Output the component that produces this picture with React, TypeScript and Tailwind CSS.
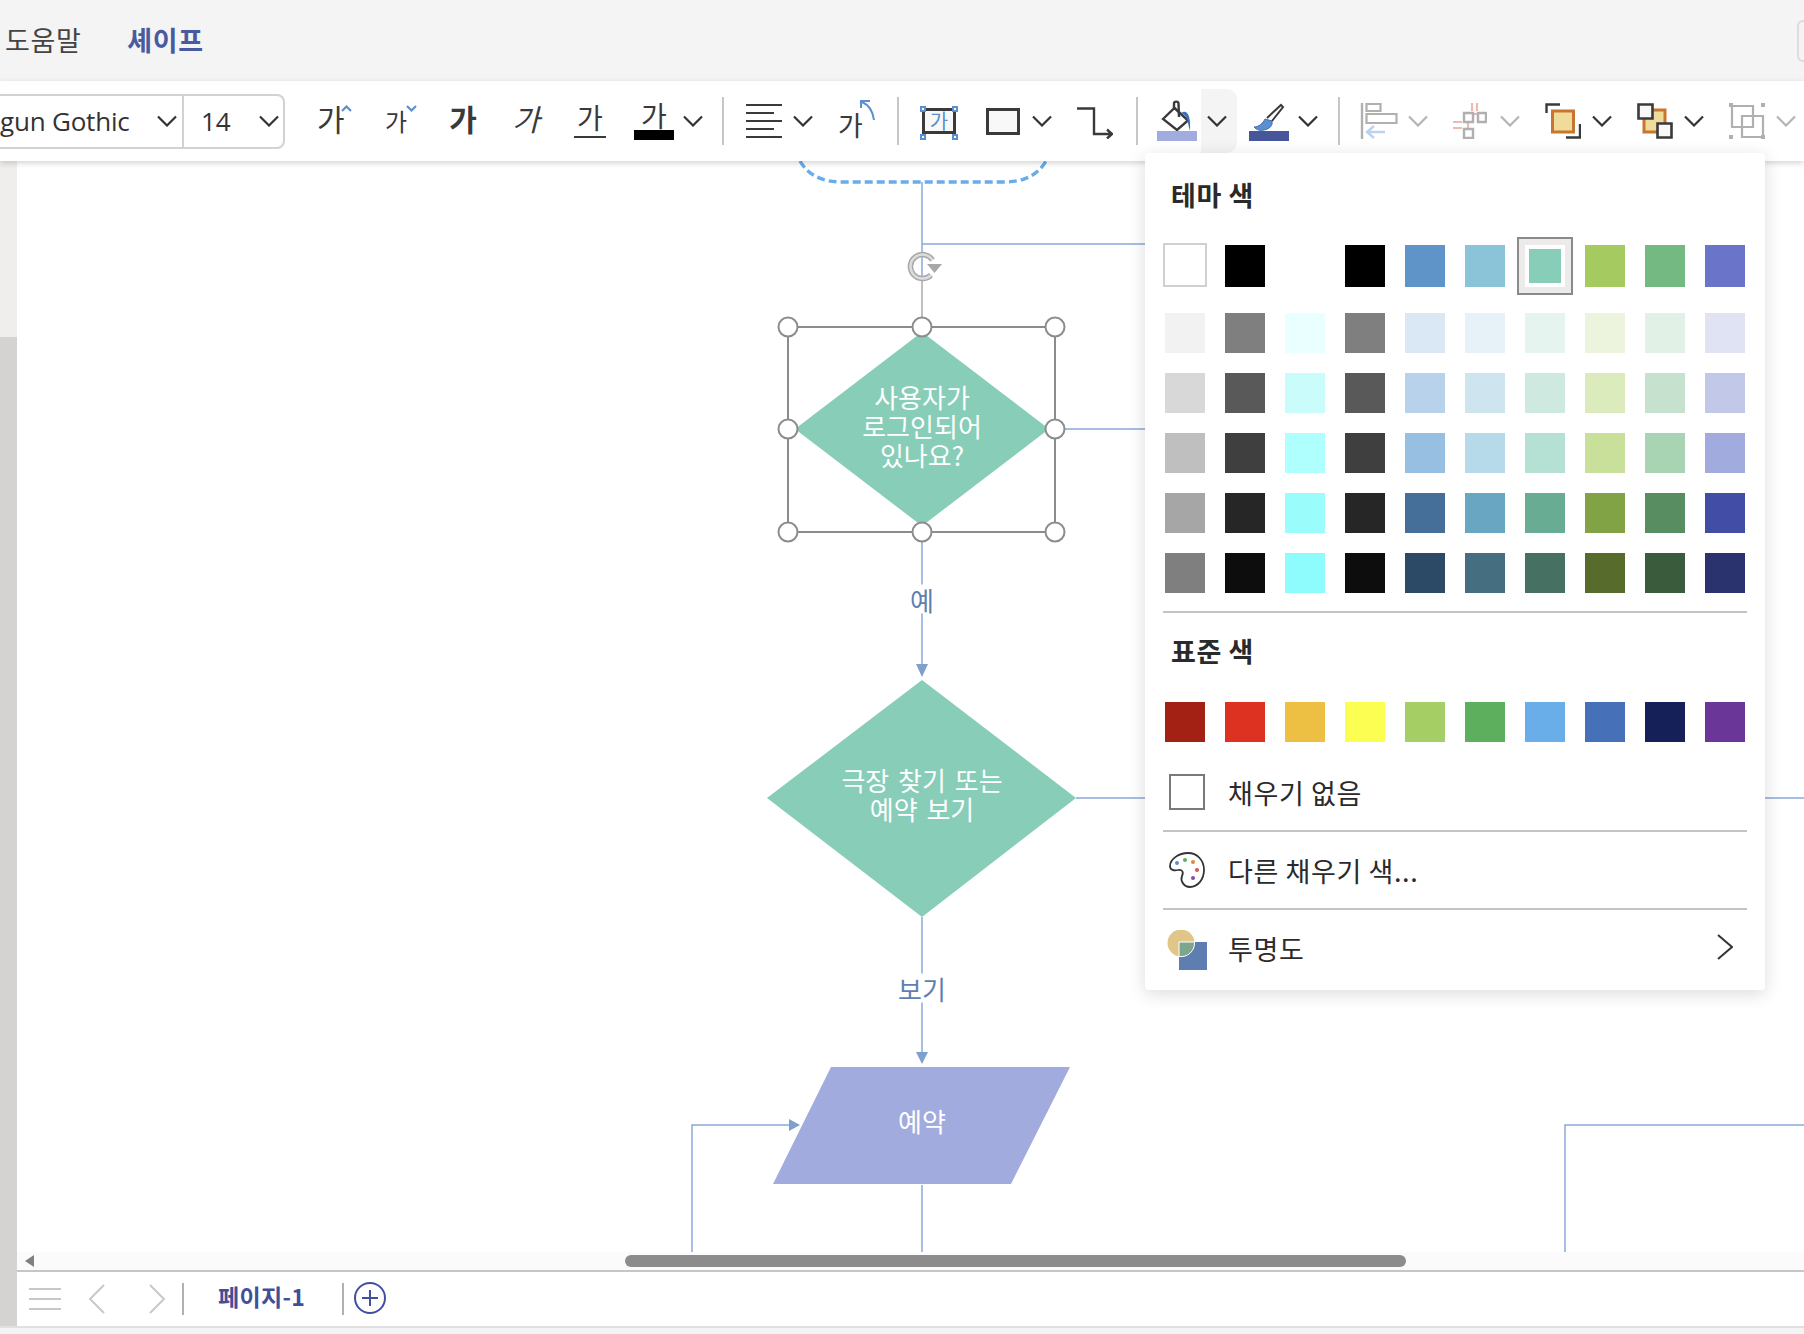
import type { ReactNode } from "react";

const FONT = "font-['Noto_Sans_CJK_KR','Open_Sans',sans-serif]";

const themeRows = [
  ["bg-[#f2f2f2]", "bg-[#7f7f7f]", "bg-[#eaffff]", "bg-[#7f7f7f]", "bg-[#dae8f5]", "bg-[#e6f2f8]", "bg-[#e5f4ef]", "bg-[#ecf4dd]", "bg-[#e1f1e6]", "bg-[#e0e3f3]"],
  ["bg-[#d8d8d8]", "bg-[#595959]", "bg-[#cbfcfc]", "bg-[#595959]", "bg-[#b7d2ea]", "bg-[#cee5ef]", "bg-[#cde9e0]", "bg-[#dbebbc]", "bg-[#c6e2cf]", "bg-[#c2c8e8]"],
  ["bg-[#bfbfbf]", "bg-[#3f3f3f]", "bg-[#afffff]", "bg-[#3f3f3f]", "bg-[#96bfe2]", "bg-[#b6dae9]", "bg-[#b4e1d4]", "bg-[#c9e09b]", "bg-[#a9d4b4]", "bg-[#a2abdd]"],
  ["bg-[#a6a6a6]", "bg-[#262626]", "bg-[#9bfcfc]", "bg-[#262626]", "bg-[#456e98]", "bg-[#68a6c1]", "bg-[#69ac94]", "bg-[#82a345]", "bg-[#588c61]", "bg-[#424da6]"],
  ["bg-[#7f7f7f]", "bg-[#0d0d0d]", "bg-[#8efcfc]", "bg-[#0d0d0d]", "bg-[#2c4a66]", "bg-[#456e80]", "bg-[#467162]", "bg-[#576b2c]", "bg-[#3a5c3d]", "bg-[#2b336f]"],
];

const standardColors = ["bg-[#a32015]", "bg-[#dd3222]", "bg-[#edc044]", "bg-[#fdfe52]", "bg-[#a5ce64]", "bg-[#5dae5d]", "bg-[#69aee9]", "bg-[#4670b8]", "bg-[#152058]", "bg-[#6a3799]"];

function Chevron({ className = "", muted = false }: { className?: string; muted?: boolean }) {
  return (
    <svg width="20" height="12" viewBox="0 0 20 12" className={`shrink-0 ${className}`} fill="none" stroke={muted ? "#b4b4b4" : "#333"} strokeWidth="2.2">
      <path d="M1 1.5l9 9 9-9" />
    </svg>
  );
}

function Divider({ className = "" }: { className?: string }) {
  return <div className={`w-[2px] h-[48px] bg-[#c6c6c6] shrink-0 ${className}`} />;
}

function Ga({ className = "" }: { className?: string }) {
  return <span className={`block leading-none text-[#3a3a3a] ${className}`}>가</span>;
}

function Box({ className, children }: { className: string; children: ReactNode }) {
  return <div className={`relative h-[60px] shrink-0 flex flex-col items-center justify-center ${className}`}>{children}</div>;
}

function Toolbar() {
  return (
    <div className="relative z-10 h-[80px] shrink-0 bg-white flex items-center shadow-[0_2px_6px_rgba(0,0,0,0.18)] text-[#333]">
      <div className="w-[285px] h-[55px] shrink-0 flex items-center border-2 border-l-0 border-[#d2d2d2] rounded-r-[8px] text-[26px] font-['Open_Sans',sans-serif]">
        <div className="w-[184px] h-full flex items-center justify-between pr-[5px] border-r-2 border-[#d2d2d2] overflow-hidden">
          <span className="whitespace-nowrap tracking-[-0.2px]">gun Gothic</span>
          <Chevron />
        </div>
        <div className="flex-1 flex items-center justify-between pl-[17px] pr-[4px]">
          <span>14</span>
          <Chevron />
        </div>
      </div>

      <Box className="ml-[32px] w-[35px] items-start">
        <Ga className="text-[30px] -mt-[6px]" />
        <svg width="11" height="7" viewBox="0 0 11 7" className="absolute right-0 top-[14px]" fill="none" stroke="#5b8fd0" strokeWidth="2.2"><path d="M1 6l4.500-4.500L10 6" /></svg>
      </Box>
      <Box className="ml-[33px] w-[32px] items-start">
        <Ga className="text-[24px]" />
        <svg width="11" height="7" viewBox="0 0 11 7" className="absolute right-0 top-[14px]" fill="none" stroke="#5b8fd0" strokeWidth="2.2"><path d="M1 1l4.500 4.500L10 1" /></svg>
      </Box>
      <Box className="ml-[33px] w-[26px]"><Ga className="text-[30px] font-bold -mt-[6px]" /></Box>
      <Box className="ml-[36px] w-[28px]"><Ga className="text-[30px] italic -mt-[6px]" /></Box>
      <Box className="ml-[34px] w-[32px]">
        <Ga className="text-[28px] -mt-[2px]" />
        <div className="w-[32px] h-[2px] bg-[#3a3a3a] mt-[5px]" />
      </Box>
      <Box className="ml-[28px] w-[40px]">
        <Ga className="text-[28px] -mt-[2px]" />
        <div className="w-[40px] h-[10px] bg-black mt-[1px]" />
      </Box>
      <Chevron className="ml-[9px]" />
      <Divider className="ml-[19px]" />

      <svg width="36" height="36" viewBox="0 0 36 36" className="ml-[22px] shrink-0" fill="none" stroke="#3a3a3a" strokeWidth="2">
        <path d="M0 2h36M0 10h28M0 18h36M0 26h28M0 34h36" />
      </svg>
      <Chevron className="ml-[11px]" />
      <Box className="ml-[25px] w-[38px] items-start pt-[6px]">
        <Ga className="text-[27px]" />
        <svg width="16" height="21" viewBox="0 0 16 21" className="absolute right-0 top-[9px]" fill="none" stroke="#5b8fd0" strokeWidth="2"><path d="M1 8V1h9M2 2c7 3 11 10 12 18" /></svg>
      </Box>
      <Divider className="ml-[21px]" />

      <Box className="ml-[21px] w-[38px]">
        <div className="w-[34px] h-[26px] border-[3px] border-[#3a3a3a] bg-[#f8f8f8] flex items-center justify-center text-[20px] leading-none text-[#5b8fd0]">가</div>
        <span className="absolute left-0 top-[15px] w-[6px] h-[6px] bg-white border-2 border-[#5b8fd0]" />
        <span className="absolute right-0 top-[15px] w-[6px] h-[6px] bg-white border-2 border-[#5b8fd0]" />
        <span className="absolute left-0 bottom-[11px] w-[6px] h-[6px] bg-white border-2 border-[#5b8fd0]" />
        <span className="absolute right-0 bottom-[11px] w-[6px] h-[6px] bg-white border-2 border-[#5b8fd0]" />
      </Box>
      <div className="ml-[28px] w-[34px] h-[27px] border-[3px] border-[#3a3a3a] bg-[#f8f8f8] shrink-0" />
      <Chevron className="ml-[12px]" />
      <svg width="36" height="36" viewBox="0 0 36 36" className="ml-[25px] shrink-0" fill="none" stroke="#3a3a3a" strokeWidth="2.4">
        <path d="M0 5.500h17v25.500h18M30 26.500l5 4.500-5 4.500" />
      </svg>
      <Divider className="ml-[23px]" />

      <Box className="ml-[19px] w-[40px] justify-start pt-[9px]">
        <svg width="40" height="31" viewBox="0 0 40 31" fill="none">
          <path d="M6 19L17.500 8 31 20.500 20 30z" stroke="#3a3a3a" strokeWidth="2.4" fill="#fff" />
          <path d="M17 10V3.500c0-2.500 4.500-2.500 4.500 0L22 17" stroke="#3a3a3a" strokeWidth="2.4" />
          <path d="M24 13c6-4 10 2 9 18-2-6-2-11-4-14-1-2-3-3-5-4z" fill="#3f6fb8" />
        </svg>
        <div className="w-[40px] h-[10px] bg-[#a2abdd]" />
      </Box>
      <div className="ml-[4px] w-[36px] h-[64px] shrink-0 bg-[#f4f4f4] rounded-r-[10px] flex items-center pl-[6px]"><Chevron /></div>
      <Box className="ml-[12px] w-[40px] justify-start pt-[11px]">
        <svg width="40" height="29" viewBox="0 0 40 29" fill="none">
          <path d="M5 25c5 0 9-4 11-8l7 2c1 5-3 8-8 9-4 1-7 0-10-3z" fill="#5b8fd0" stroke="#3f6fb8" />
          <path d="M18 16L32 3l2 2-11 14" stroke="#3a3a3a" strokeWidth="2" />
        </svg>
        <div className="w-[40px] h-[10px] bg-[#47569b]" />
      </Box>
      <Chevron className="ml-[9px]" />
      <Divider className="ml-[20px]" />

      <svg width="38" height="38" viewBox="0 0 38 38" className="ml-[20px] shrink-0" fill="none">
        <path d="M2 1v36" stroke="#b0b0b0" strokeWidth="2.4" />
        <path d="M6.500 2h14v7h-14zM6.500 12h30v9h-30z" stroke="#b0b0b0" strokeWidth="2.2" />
        <path d="M25 30H7M14 24l-7 6 7 6" stroke="#bcd3ef" strokeWidth="2.4" />
      </svg>
      <Chevron muted className="ml-[10px]" />
      <svg width="34" height="36" viewBox="0 0 34 36" className="ml-[25px] shrink-0" fill="none">
        <path d="M19 0v8M24 0v8M0 19h9M0 25h9M19 11h6M15 20v6" stroke="#efb8b0" strokeWidth="2.2" />
        <path d="M11 10h9v9h-9zM25 10h8v9h-8zM11 26h9v9h-9z" stroke="#b0b0b0" strokeWidth="2.4" />
      </svg>
      <Chevron muted className="ml-[13px]" />
      <svg width="36" height="36" viewBox="0 0 36 36" className="ml-[25px] shrink-0" fill="none">
        <path d="M1.500 10V1.500H15M35 21v13.500H21" stroke="#3a3a3a" strokeWidth="2.4" />
        <path d="M7.500 8h21v21h-21z" fill="#efdc9a" stroke="#c87530" strokeWidth="3" />
      </svg>
      <Chevron className="ml-[11px]" />
      <svg width="36" height="36" viewBox="0 0 36 36" className="ml-[25px] shrink-0" fill="none">
        <path d="M7 7h21v22H7z" fill="#efdc9a" stroke="#c87530" strokeWidth="3" />
        <path d="M1.500 1.500h14v14h-14zM20.500 20.500h14v14h-14z" fill="#f8f8f8" stroke="#3a3a3a" strokeWidth="2.6" />
      </svg>
      <Chevron className="ml-[11px]" />
      <svg width="36" height="36" viewBox="0 0 36 36" className="ml-[25px] shrink-0" fill="none">
        <path d="M3 3h21v21H3zM13 13h21v21H13z" stroke="#b0b0b0" strokeWidth="2.2" />
        <path d="M0 0h4v4H0zM32 0h4v4h-4zM0 32h4v4H0zM32 32h4v4h-4z" fill="#b0b0b0" />
      </svg>
      <Chevron muted className="ml-[11px]" />
    </div>
  );
}

function Flowchart() {
  return (
    <svg width="1787" height="1091" viewBox="17 161 1787 1091" className="absolute inset-0" fill="none">
      <path d="M800 161c8 14 22 21 42 21h162c20 0 34-7 42-21" stroke="#68aceb" strokeWidth="3.4" strokeDasharray="8 4" />
      <g stroke="#8ca8da" strokeWidth="1.5">
        <path d="M922 182V282M922 244H1145M1065 429H1145M922 532V664M1076 798H1145M1765 798H1804M922 917V1052M922 1185V1252" />
        <path d="M692 1252V1125H790M1565 1252V1125H1804" />
      </g>
      <path d="M916 664h12l-6 13zM916 1052h12l-6 12zM789 1119v12l11-6z" fill="#7f9fcd" />
      <path d="M922 282V317" stroke="#c0c0c0" strokeWidth="2" />
      <path d="M932.500 260A12 12 0 1 0 931 275" stroke="#a8a8a8" strokeWidth="5.500" />
      <path d="M932.500 260A12 12 0 1 0 931 275" stroke="#dcdcdc" strokeWidth="2.500" />
      <path d="M927 264h15l-7.500 9z" fill="#a8a8a8" />

      <path d="M922 332L1049 429 922 526 795 429z" fill="#88cdb8" />
      <path d="M788 327H1055V532H788z" stroke="#8c8c8c" strokeWidth="2" />
      {[788, 922, 1055].map((cx) =>
        [327, 429, 532].map((cy) =>
          cx === 922 && cy === 429 ? null : <circle key={`${cx}-${cy}`} cx={cx} cy={cy} r="9.500" fill="#fff" stroke="#8c8c8c" strokeWidth="2" />
        )
      )}
      <path d="M922 680L1076 798 922 917 767 798z" fill="#88cdb8" />
      <path d="M831 1067H1070L1011 1184H773z" fill="#a2abdd" />
    </svg>
  );
}

function FlowLabel({ className, children }: { className: string; children: ReactNode }) {
  return (
    <div className={`absolute -translate-x-1/2 -translate-y-1/2 text-center whitespace-nowrap text-[26px] leading-[29px] [word-spacing:3px] ${className}`}>
      {children}
    </div>
  );
}

function ColorPanel() {
  return (
    <div className="absolute z-20 left-[1145px] top-[153px] w-[620px] h-[837px] bg-white rounded-[4px] shadow-[0_4px_18px_rgba(0,0,0,0.14)] text-[#2a2a2a] text-[27px] tracking-[0.6px]">
      <div className="h-[92px] pl-[26px] pt-[26px] leading-[32px] font-bold">테마 색</div>
      <div className="pl-[20px]">
        <div className="grid grid-cols-[repeat(10,40px)] gap-x-[20px] h-[40px]">
          <div className="w-[44px] h-[44px] -mt-[2px] -ml-[2px] border-2 border-[#d0d0d0] bg-white" />
          <div className="bg-black" />
          <div className="bg-white" />
          <div className="bg-black" />
          <div className="bg-[#5f94c9]" />
          <div className="bg-[#8bc3d9]" />
          <div className="relative">
            <div className="absolute -inset-x-[8px] -inset-y-[8px] border-2 border-[#8a8a8a] bg-[#ecebe9] p-[6px]">
              <div className="w-full h-full bg-white p-[4px]">
                <div className="w-full h-full bg-[#88cdb8]" />
              </div>
            </div>
          </div>
          <div className="bg-[#a5ca60]" />
          <div className="bg-[#74b982]" />
          <div className="bg-[#6a75c9]" />
        </div>
        <div className="mt-[28px] flex flex-col gap-y-[20px]">
          {themeRows.map((row, i) => (
            <div key={i} className="grid grid-cols-[repeat(10,40px)] gap-x-[20px] h-[40px]">
              {row.map((c, j) => <div key={j} className={c} />)}
            </div>
          ))}
        </div>
      </div>
      <div className="mx-[18px] mt-[18px] h-[2px] bg-[#c4c4c4]" />
      <div className="h-[89px] pl-[26px] pt-[22px] leading-[32px] font-bold">표준 색</div>
      <div className="pl-[20px] grid grid-cols-[repeat(10,40px)] gap-x-[20px] h-[40px]">
        {standardColors.map((c) => <div key={c} className={c} />)}
      </div>
      <div className="mt-[32px] h-[36px] pl-[24px] flex items-center">
        <div className="w-[36px] h-[36px] border-2 border-[#7a7a78]" />
        <span className="ml-[23px] mt-[2px]">채우기 없음</span>
      </div>
      <div className="mx-[18px] mt-[20px] h-[2px] bg-[#c4c4c4]" />
      <div className="h-[76px] pl-[24px] flex items-center">
        <svg width="36" height="36" viewBox="0 0 36 36" fill="none">
          <path d="M19 1C10 1 1 7 1 14c0 4 4 5 8 4s6 2 4 6c-2 5 2 11 8 11 8 0 14-8 14-17C35 8 28 1 19 1z" stroke="#333" strokeWidth="1.8" />
          <circle cx="8" cy="11" r="2" fill="#5b8fd0" />
          <circle cx="16" cy="8" r="2" fill="#5dae5d" />
          <circle cx="24" cy="10" r="2" fill="#e08a3c" />
          <circle cx="28" cy="18" r="2" fill="#d9534f" />
          <circle cx="24" cy="26" r="2" fill="#8a4aa8" />
        </svg>
        <span className="ml-[23px] mt-[2px]">다른 채우기 색...</span>
      </div>
      <div className="mx-[18px] h-[2px] bg-[#c4c4c4]" />
      <div className="h-[80px] pl-[22px] pr-[32px] flex items-center">
        <svg width="40" height="40" viewBox="0 0 40 40">
          <circle cx="14" cy="13" r="13.500" fill="#e1c68a" />
          <path d="M12 12h28v28H12z" fill="#5e7eb2" />
          <path d="M12 12h15.500A13.500 13.500 0 0 1 12 26.500z" fill="#7ea68f" stroke="#fff" strokeWidth="1" />
        </svg>
        <span className="ml-[21px] flex-1 -mt-[2px]">투명도</span>
        <svg width="16" height="26" viewBox="0 0 16 26" className="-mt-[6px]" fill="none" stroke="#333" strokeWidth="2"><path d="M1 1l14 12L1 25" /></svg>
      </div>
    </div>
  );
}

export default function App() {
  return (
    <div className={`relative w-[1804px] h-[1334px] overflow-hidden flex flex-col bg-white ${FONT}`}>
      <div className="h-[81px] shrink-0 bg-[#f4f4f4] relative flex items-center pl-[5px] text-[27px] tracking-[0.6px]">
        <span className="text-[#444]">도움말</span>
        <span className="ml-[46px] font-bold text-[#4a5aa0]">셰이프</span>
        <div className="absolute right-0 top-[20px] w-[7px] h-[42px] border-2 border-r-0 border-[#dcdcdc] rounded-l-[6px]" />
      </div>
      <Toolbar />

      <div className="flex-1 flex min-h-0">
        <div className="w-[17px] shrink-0 flex flex-col">
          <div className="h-[176px] bg-[#efeeec]" />
          <div className="flex-1 bg-[#d4d3d1]" />
        </div>
        <div className="flex-1 flex flex-col min-w-0">
          <div className="relative flex-1 bg-white overflow-hidden">
            <Flowchart />
            <FlowLabel className="left-[905px] top-[264px] text-white"><div>사용자가</div><div>로그인되어</div><div>있나요?</div></FlowLabel>
            <FlowLabel className="left-[905px] top-[633px] text-white"><div>극장 찾기 또는</div><div>예약 보기</div></FlowLabel>
            <FlowLabel className="left-[905px] top-[959px] text-white">예약</FlowLabel>
            <FlowLabel className="left-[905px] top-[438px] text-[#5f7fb0] bg-white">예</FlowLabel>
            <FlowLabel className="left-[905px] top-[827px] text-[#5f7fb0] bg-white">보기</FlowLabel>
          </div>
          <div className="h-[18px] shrink-0 bg-[#fbfbfb] relative flex items-center">
            <svg width="9" height="12" viewBox="0 0 9 12" className="ml-[8px]"><path d="M9 0v12L0 6z" fill="#808080" /></svg>
            <div className="ml-[591px] w-[781px] h-[12px] rounded-[6px] bg-[#8c8c8c]" />
          </div>
          <div className="h-[2px] shrink-0 bg-[#c6c6c6]" />
          <div className="h-[54px] shrink-0 bg-white flex items-center">
            <svg width="32" height="24" viewBox="0 0 32 24" className="ml-[12px]" stroke="#c8c8c8" strokeWidth="2"><path d="M0 2h32M0 12h32M0 22h32" /></svg>
            <svg width="18" height="30" viewBox="0 0 18 30" className="ml-[27px]" fill="none" stroke="#c8c8c8" strokeWidth="2"><path d="M16 1L2 15l14 14" /></svg>
            <svg width="18" height="30" viewBox="0 0 18 30" className="ml-[42px]" fill="none" stroke="#c8c8c8" strokeWidth="2"><path d="M2 1l14 14L2 29" /></svg>
            <div className="ml-[16px] w-[2px] h-[32px] bg-[#b0b0b0]" />
            <span className="ml-[34px] -mt-[5px] w-[124px] font-bold text-[23px] tracking-[0.3px] text-[#3f4f9a]">페이지-1</span>
            <div className="w-[2px] h-[32px] bg-[#b0b0b0]" />
            <svg width="32" height="32" viewBox="0 0 32 32" className="ml-[10px] -mt-[2px]" fill="none" stroke="#414fa3" strokeWidth="2"><circle cx="16" cy="16" r="15" /><path d="M16 8v16M8 16h16" /></svg>
          </div>
        </div>
      </div>
      <div className="h-[2px] shrink-0 bg-[#e0e0e0]" />
      <div className="h-[6px] shrink-0 bg-[#f4f4f4]" />

      <ColorPanel />
    </div>
  );
}
